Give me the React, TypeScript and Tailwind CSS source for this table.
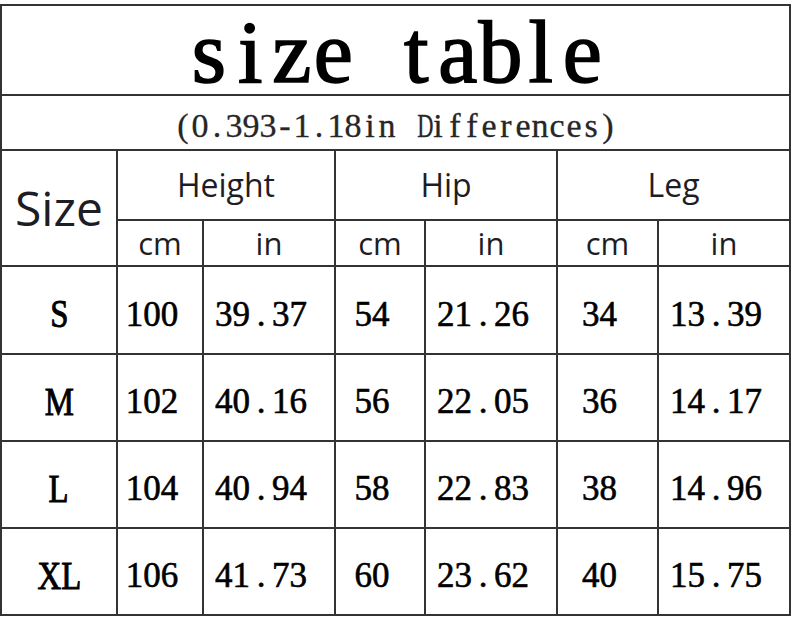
import React from 'react';

type Row = { size: string; values: string[] };

const rows: Row[] = [
  { size: 'S', values: ['100', '39.37', '54', '21.26', '34', '13.39'] },
  { size: 'M', values: ['102', '40.16', '56', '22.05', '36', '14.17'] },
  { size: 'L', values: ['104', '40.94', '58', '22.83', '38', '14.96'] },
  { size: 'XL', values: ['106', '41.73', '60', '23.62', '40', '15.75'] },
];

const serif = "font-['Liberation_Serif',serif]";
const sans = "font-['Open_Sans',sans-serif]";

// fixed pitch per character, like the half-width latin of a CJK font
const Mono = ({ text, cell }: { text: string; cell: string }) => (
  <>
    {[...text].map((ch, i) => (
      <span key={i} className={`inline-block text-center ${cell}`}>
        {ch === ' ' ? (
          '\u00a0'
        ) : /[A-Z]/.test(ch) ? (
          <span className="inline-block scale-x-[0.66]">{ch}</span>
        ) : (
          ch
        )}
      </span>
    ))}
  </>
);

const Num = ({ value }: { value: string }) => (
  <>
    {[...value].map((ch, i) => (
      <span key={i} className={ch === '.' ? 'inline-block w-[22px] text-center' : 'inline-block w-[17.5px] text-center'}>
        {ch}
      </span>
    ))}
  </>
);

const cell = 'bg-white flex items-center justify-center';

export default function App() {
  return (
    <div className="w-[794px] h-[620px] bg-white overflow-hidden pt-[4px]">
      <div className="w-[791px] grid grid-cols-[114px_84px_130px_88px_130px_99px_130px] grid-rows-[88px_53px_68px_44px_86px_85px_85px_85px] gap-[2px] p-[2px] bg-[#333]">
        {/* title */}
        <div className={`${cell} col-span-7 pt-[6px] ${serif} text-[88px] leading-none text-black whitespace-nowrap [-webkit-text-stroke:1.6px_#000]`}>
          <Mono text="size table" cell="w-[41.5px]" />
        </div>
        <div className={`${cell} col-span-7 pt-[6px] ${serif} text-[34px] leading-none text-[#262626] whitespace-nowrap [-webkit-text-stroke:0.3px_#262626]`}>
          <Mono text="(0.393-1.18in Differences)" cell="w-[17px]" />
        </div>

        {/* header */}
        <div className={`${cell} row-span-2 ${sans} text-[48px] leading-none text-[#1d1d26]`}>Size</div>
        <div className={`${cell} col-span-2 ${sans} text-[32px] leading-none text-[#1d1d26]`}>Height</div>
        <div className={`${cell} col-span-2 ${sans} text-[32px] leading-none text-[#1d1d26]`}>Hip</div>
        <div className={`${cell} col-span-2 ${sans} text-[32px] leading-none text-[#1d1d26]`}>Leg</div>
        {['cm', 'in', 'cm', 'in', 'cm', 'in'].map((u, i) => (
          <div key={i} className={`${cell} ${sans} text-[31px] leading-none text-[#1d1d26]`}>
            {u}
          </div>
        ))}

        {/* data */}
        {rows.map((r) => (
          <React.Fragment key={r.size}>
            <div className={`${cell} pt-[7px] ${serif} text-[41px] leading-none text-black [-webkit-text-stroke:1px_#000]`}>
              <span className="inline-block scale-x-[0.8]">{r.size}</span>
            </div>
            {r.values.map((v, i) => (
              <div key={i} className={`${cell} pt-2 pr-4 ${serif} text-[35px] leading-none text-black whitespace-nowrap [-webkit-text-stroke:0.6px_#000]`}>
                <Num value={v} />
              </div>
            ))}
          </React.Fragment>
        ))}
      </div>
    </div>
  );
}
